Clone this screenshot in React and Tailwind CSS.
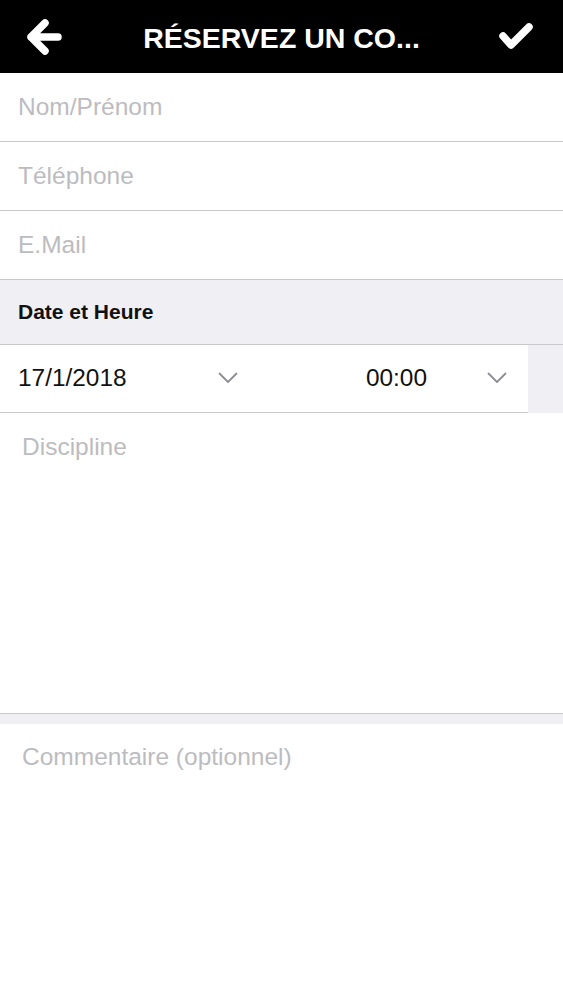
import React from "react";

const font = { fontFamily: '"Liberation Sans", Arial, sans-serif' };

function Chevron() {
  return (
    <svg width="20" height="12" viewBox="0 0 20 12" fill="none">
      <path d="M1.5 1.5 L10 10 L18.5 1.5" stroke="#8e8e93" strokeWidth="1.8" strokeLinecap="round" strokeLinejoin="round" />
    </svg>
  );
}

function Row({ label }) {
  return (
    <div className="h-[69px] border-b border-[#c8c7cc] flex items-center pl-[18px] text-[24.5px] text-[#bcbcc0]">
      {label}
    </div>
  );
}

export default function App() {
  return (
    <div className="w-[563px] h-[1000px] bg-white overflow-hidden font-['Liberation_Sans',Arial,sans-serif]" style={font}>
      <header className="h-[73px] bg-black grid grid-cols-[1fr_auto_1fr] items-center">
        <div className="pl-[24px] flex items-center">
          <svg width="40" height="42" viewBox="0 0 40 42" fill="none">
            <path d="M21 7 L7 21 L21 35 M7 21 L34 21" stroke="white" strokeWidth="7.5" strokeLinecap="round" strokeLinejoin="round" />
          </svg>
        </div>
        <div className="text-white font-bold text-[28.5px] leading-none pt-[3px] whitespace-nowrap">RÉSERVEZ UN CO...</div>
        <div className="flex justify-end pr-[27px]">
          <svg width="40" height="36" viewBox="0 0 40 36" fill="none">
            <path d="M7 17 L15 26 L33 8" stroke="white" strokeWidth="7.5" strokeLinecap="round" strokeLinejoin="round" />
          </svg>
        </div>
      </header>

      <Row label="Nom/Prénom" />
      <Row label="Téléphone" />
      <Row label="E.Mail" />

      <div className="h-[65px] bg-[#efeff4] border-b border-[#c8c7cc] flex items-center pl-[18px] text-[21px] font-bold text-[#111]">
        Date et Heure
      </div>

      <div className="h-[68px] flex bg-[#efeff4]">
        <div className="w-[528px] bg-white border-b border-[#c8c7cc] flex items-center text-[24.4px] text-[#111]">
          <div className="w-[264px] pl-[18px] pr-[26px] flex items-center justify-between">
            <span>17/1/2018</span>
            <Chevron />
          </div>
          <div className="flex-1 flex items-center justify-end pr-[21px] gap-[60px]">
            <span>00:00</span>
            <Chevron />
          </div>
        </div>
      </div>

      <div className="h-[301px] border-b border-[#c8c7cc] pl-[22px] pt-[20px] text-[24.5px] leading-[28px] text-[#bcbcc0]">
        Discipline
      </div>
      <div className="h-[10px] bg-[#efeff4]" />
      <div className="pl-[22px] pt-[19px] text-[24.5px] leading-[28px] text-[#bcbcc0]">
        Commentaire (optionnel)
      </div>
    </div>
  );
}
